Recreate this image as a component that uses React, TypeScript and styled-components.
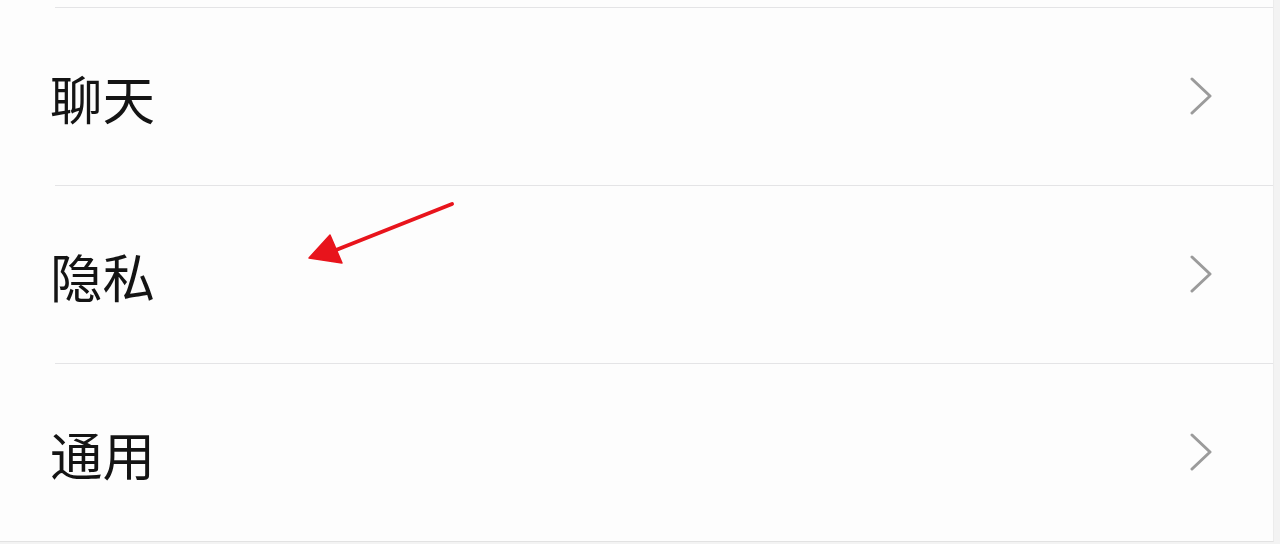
import React from "react";
import styled, { createGlobalStyle } from "styled-components";

const Global = createGlobalStyle`
  html, body { margin: 0; padding: 0; background: #ededed; }
  body { width: 1280px; height: 544px; overflow: hidden; font-family: "Noto Sans CJK SC", "Noto Sans", sans-serif; }
`;

const Page = styled.div`
  display: flex;
  width: 1280px;
  height: 544px;
  background: #f3f3f3;
`;

const Panel = styled.div`
  width: 1273px;
  height: 541px;
  background: #fdfdfd;
  border-right: 1px solid #ececec;
  border-bottom: 1px solid #e2e2e2;
  display: flex;
  flex-direction: column;
`;

const TopStub = styled.div`
  height: 7px;
  flex: none;
`;

const Separator = styled.div`
  height: 1px;
  margin-left: 55px;
  background: #e4e4e6;
  flex: none;
`;

const Row = styled.div`
  position: relative;
  height: 177px;
  flex: none;
  display: flex;
  align-items: center;
  justify-content: space-between;
  padding: 0 60px 0 50px;
`;

const Label = styled.span`
  font-size: 52.5px;
  line-height: 1;
  color: #141414;
  letter-spacing: 0;
  margin-top: 1px;
`;

const Chevron = styled.svg`
  width: 24px;
  height: 40px;
  flex: none;
`;

const Arrow = styled.svg`
  position: absolute;
  left: 300px;
  top: 10px;
  width: 160px;
  height: 70px;
  overflow: visible;
`;

const items = ["聊天", "隐私", "通用"];

export default function App() {
  return (
    <>
      <Global />
      <Page>
        <Panel>
          <TopStub />
          <Separator />
          {items.map((t, i) => (
            <React.Fragment key={t}>
              <Row>
                <Label>{t}</Label>
                <Chevron viewBox="0 0 24 40">
                  <polyline
                    points="3,2 21,19 3,36"
                    fill="none"
                    stroke="#9b9b9b"
                    strokeWidth="3"
                    strokeLinecap="round"
                    strokeLinejoin="round"
                  />
                </Chevron>
                {i === 1 && (
                  <Arrow viewBox="0 0 160 70">
                    <line x1="152" y1="8" x2="36" y2="54" stroke="#e8141c" strokeWidth="4" strokeLinecap="round" />
                    <polygon points="9,62 30,39 42,67" fill="#e8141c" stroke="#e8141c" strokeWidth="1.5" strokeLinejoin="round" />
                  </Arrow>
                )}
              </Row>
              {i < items.length - 1 && <Separator />}
            </React.Fragment>
          ))}
        </Panel>
      </Page>
    </>
  );
}
